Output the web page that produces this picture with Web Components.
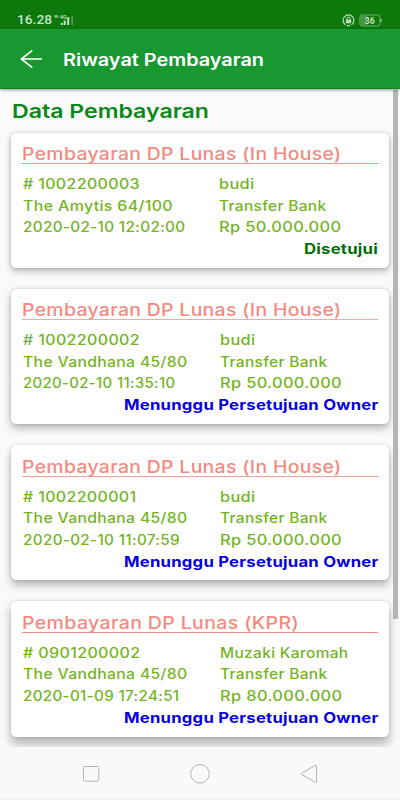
<!DOCTYPE html>
<html lang="id">
<head>
<meta charset="utf-8">
<title>Riwayat Pembayaran</title>
<style>
  html, body {
    margin: 0;
    height: 100%;
    overflow: hidden;
  }
</style>
</head>
<body>
<payment-history-app></payment-history-app>

<script>
/**
 * Single line of text stretched horizontally to a given width
 */
class FitText extends HTMLElement {
  constructor() {
    super();
    this.attachShadow({ mode: "open" });
    this.shadowRoot.innerHTML = `
      <style>
        :host { display: block; white-space: nowrap; }
        span { display: inline-block; transform-origin: 0 50%; }
      </style>
      <span><slot></slot></span>
    `;
  }

  connectedCallback() {
    const width = parseFloat(this.getAttribute("width"));
    const span = this.shadowRoot.querySelector("span");
    this.style.width = `${width}px`;
    const natural = span.getBoundingClientRect().width;
    if (natural > 0) {
      span.style.transform = `scaleX(${width / natural})`;
    }
  }
}

/**
 * Phone status bar: clock, signal, rotation lock and battery
 */
class StatusBar extends HTMLElement {
  constructor() {
    super();
    this.attachShadow({ mode: "open" });
    this.shadowRoot.innerHTML = `
      <style>
        :host {
          display: flex;
          align-items: center;
          box-sizing: border-box;
          height: 29px;
          padding: 11px 18px 0 17px;
          background: #0d780c;
          color: #c7e2c5;
          font: 500 13.4px/18px Roboto, sans-serif;
        }
        .signal { margin-left: 2px; }
        .lock { margin-left: auto; }
        .battery { margin-left: 4px; }
        svg { display: block; }
      </style>
      <fit-text width="35">16.28</fit-text>
      <svg class="signal" width="21" height="14" viewBox="0 0 21 14">
        <circle cx="1.9" cy="3.4" r="1.3" fill="#a9d0a7"/>
        <path d="M4 2.2v2.5" stroke="#a9d0a7" stroke-width=".8"/>
        <text x="5.8" y="6.2" font-size="5.6" font-family="Roboto, sans-serif" fill="#c7e2c5">4G</text>
        <path d="M7.8 10v2M10.7 7.6V12M14.2 4.2V12" stroke="#c7e2c5" stroke-width="2"/>
        <path d="M18.2 3v9" stroke="#52a050" stroke-width="1.6"/>
      </svg>
      <svg class="lock" width="13" height="13" viewBox="0 0 13 13" fill="none" stroke="#bfe0bd">
        <path d="M3.7 10.9A5.4 5.4 0 1 1 9.3 10.9M5 11.6h3" stroke-width="1.1"/>
        <path d="M4.9 6V4.9a1.6 1.6 0 0 1 3.2 0V6" stroke-width="1.1"/>
        <rect x="3.8" y="5.7" width="5.4" height="3.6" rx=".5" fill="#bfe0bd" stroke="none"/>
      </svg>
      <svg class="battery" width="23" height="13" viewBox="0 0 23 13">
        <rect x=".9" y="1" width="20" height="11" rx="2.5" fill="none" stroke="#6fb06d"/>
        <path d="M3 1.5h5.5v10H3a1.6 1.6 0 0 1-1.6-1.6V3.1A1.6 1.6 0 0 1 3 1.5z" fill="#479746"/>
        <path d="M22 5v3" stroke="#a9d0a7" stroke-width="1.2"/>
        <text x="5.8" y="9.5" font-size="8.5" font-weight="700" font-family="Roboto, sans-serif" fill="#c7e2c5">36</text>
      </svg>
    `;
  }
}

class AppBar extends HTMLElement {
  constructor() {
    super();
    this.attachShadow({ mode: "open" });
    this.shadowRoot.innerHTML = `
      <style>
        :host {
          display: flex;
          align-items: center;
          box-sizing: border-box;
          height: 59.5px;
          padding: 2px 0 0 20px;
          gap: 19.5px;
          background: #189831;
          border-bottom: 1.5px solid #0c8720;
          box-shadow: 0 1px 3px rgba(0, 0, 0, .4);
          color: #fff;
          font-size: 17px;
          font-weight: 600;
          line-height: 24px;
          z-index: 1;
        }
        .title { padding-top: 1.5px; }
        svg { display: block; }
      </style>
      <svg width="23" height="20" viewBox="0 0 23 20" fill="none" stroke="#fff" stroke-width="1.7">
        <path d="M22 10H1.5M12.3 1.3L1.3 10l11 8.7"/>
      </svg>
      <div class="title"><slot></slot></div>
    `;
  }
}

/**
 * One payment. Values come in through the "payment" property.
 */
class PaymentCard extends HTMLElement {
  constructor() {
    super();
    this.attachShadow({ mode: "open" });
  }

  set payment(value) {
    this.data = value;
    this.render();
  }

  line([text, width]) {
    return `<fit-text width="${width}">${text}</fit-text>`;
  }

  render() {
    const { title, left, right, status, approved, column, rule, depth } = this.data;
    this.shadowRoot.innerHTML = `
      <style>
        :host {
          display: block;
          box-sizing: border-box;
          height: 135.25px;
          padding: 9.5px 11px 0;
          background: #fff;
          border-radius: 5.5px;
          box-shadow: 0 ${depth}px ${depth + 4}px rgba(0, 0, 0, .29), 0 0 3px rgba(0, 0, 0, .14);
        }
        .title {
          height: 21px;
          border-bottom: 1px solid ${rule};
          color: #f48a80;
          font-size: 17px;
          font-weight: 500;
          letter-spacing: .3px;
          line-height: 25px;
        }
        .details {
          display: grid;
          grid-template-columns: ${column}px 1fr;
          margin-top: 9px;
          padding-left: .5px;
          color: #74b41f;
          font-size: 14px;
          font-weight: 500;
          letter-spacing: .3px;
          line-height: 21.5px;
        }
        .status {
          display: flex;
          justify-content: flex-end;
          padding-top: .5px;
          color: ${approved ? "#006e05" : "#0500e0"};
          font-size: 14.3px;
          font-weight: 700;
          letter-spacing: .2px;
          line-height: 22px;
        }
      </style>
      <div class="title">${this.line(title)}</div>
      <div class="details">
        <div>${left.map(this.line).join("")}</div>
        <div>${right.map(this.line).join("")}</div>
      </div>
      <div class="status">${this.line(status)}</div>
    `;
  }
}

class NavigationBar extends HTMLElement {
  constructor() {
    super();
    this.attachShadow({ mode: "open" });
    this.shadowRoot.innerHTML = `
      <style>
        :host {
          display: flex;
          align-items: center;
          justify-content: space-between;
          box-sizing: border-box;
          height: 53px;
          padding: 2px 82px 0;
          background: #f9f9f9;
          border-bottom: 1px solid #f1f1f1;
          z-index: 1;
        }
        svg { display: block; fill: none; stroke: #b4b4b4; }
      </style>
      <svg width="18" height="20" viewBox="0 0 18 20"><rect x="1.5" y="2.5" width="15.3" height="14.7" rx="1.3"/></svg>
      <svg width="20" height="20" viewBox="0 0 20 20"><circle cx="10" cy="9.8" r="9.3"/></svg>
      <svg width="18" height="20" viewBox="0 0 18 20"><path d="M15.4 1.3L1.6 9.2q-.9.6 0 1.2l13.8 7.9q1.1.5 1.1-.6V1.9q0-1.1-1.1-.6z"/></svg>
    `;
  }
}

const WAITING = ["Menunggu Persetujuan Owner", 254.5];

const payments = [
  {
    title: ["Pembayaran DP Lunas (In House)", 319.5],
    left: [["# 1002200003", 117], ["The Amytis 64/100", 150], ["2020-02-10 12:02:00", 162.5]],
    right: [["budi", 35.5], ["Transfer Bank", 107.5], ["Rp 50.000.000", 122.5]],
    status: ["Disetujui", 74],
    approved: true,
    column: 196,
    rule: "#f8978e",
    depth: 3,
  },
  {
    title: ["Pembayaran DP Lunas (In House)", 319.5],
    left: [["# 1002200002", 117], ["The Vandhana 45/80", 164.5], ["2020-02-10 11:35:10", 152.5]],
    right: [["budi", 35.5], ["Transfer Bank", 107.5], ["Rp 50.000.000", 122]],
    status: WAITING,
    column: 197.5,
    rule: "#efaaa3",
    depth: 4,
  },
  {
    title: ["Pembayaran DP Lunas (In House)", 319.5],
    left: [["# 1002200001", 113.5], ["The Vandhana 45/80", 164.5], ["2020-02-10 11:07:59", 157]],
    right: [["budi", 35.5], ["Transfer Bank", 107.5], ["Rp 50.000.000", 122]],
    status: WAITING,
    column: 197.5,
    rule: "#f0a099",
    depth: 5,
  },
  {
    title: ["Pembayaran DP Lunas (KPR)", 277],
    left: [["# 0901200002", 117.5], ["The Vandhana 45/80", 164.5], ["2020-01-09 17:24:51", 156.5]],
    right: [["Muzaki Karomah", 128.5], ["Transfer Bank", 107.5], ["Rp 80.000.000", 122.5]],
    status: WAITING,
    column: 197.5,
    rule: "#ef8d84",
    depth: 6.5,
  },
];

class PaymentHistoryApp extends HTMLElement {
  constructor() {
    super();
    this.attachShadow({ mode: "open" });
  }

  connectedCallback() {
    this.shadowRoot.innerHTML = `
      <style>
        :host {
          display: flex;
          flex-direction: column;
          height: 800px;
          background: #fafafa;
          font-family: Inter, "Open Sans", sans-serif;
        }
        main {
          display: flex;
          flex: 1;
          min-height: 0;
          overflow: hidden;
        }
        .list { width: 378px; padding: 8px 4px 0 11px; }
        h1 {
          margin: 0 0 6px;
          padding-left: .5px;
          height: 30px;
          color: #0b8918;
          font-size: 19.2px;
          font-weight: 600;
          line-height: 29px;
        }
        .cards { display: flex; flex-direction: column; gap: 21px; }
        .scrollbar { width: 5px; height: 529px; margin-top: 1.5px; background: #b5b5b5; }
      </style>
      <status-bar></status-bar>
      <app-bar><fit-text width="201">Riwayat Pembayaran</fit-text></app-bar>
      <main>
        <div class="list">
          <h1><fit-text width="197">Data Pembayaran</fit-text></h1>
          <div class="cards"></div>
        </div>
        <div class="scrollbar"></div>
      </main>
      <navigation-bar></navigation-bar>
    `;

    const list = this.shadowRoot.querySelector(".cards");
    payments.forEach((payment) => {
      const card = document.createElement("payment-card");
      list.appendChild(card);
      card.payment = payment;
    });
  }
}

// Register the web components
customElements.define("fit-text", FitText);
customElements.define("status-bar", StatusBar);
customElements.define("app-bar", AppBar);
customElements.define("payment-card", PaymentCard);
customElements.define("navigation-bar", NavigationBar);
customElements.define("payment-history-app", PaymentHistoryApp);
</script>
</body>
</html>
